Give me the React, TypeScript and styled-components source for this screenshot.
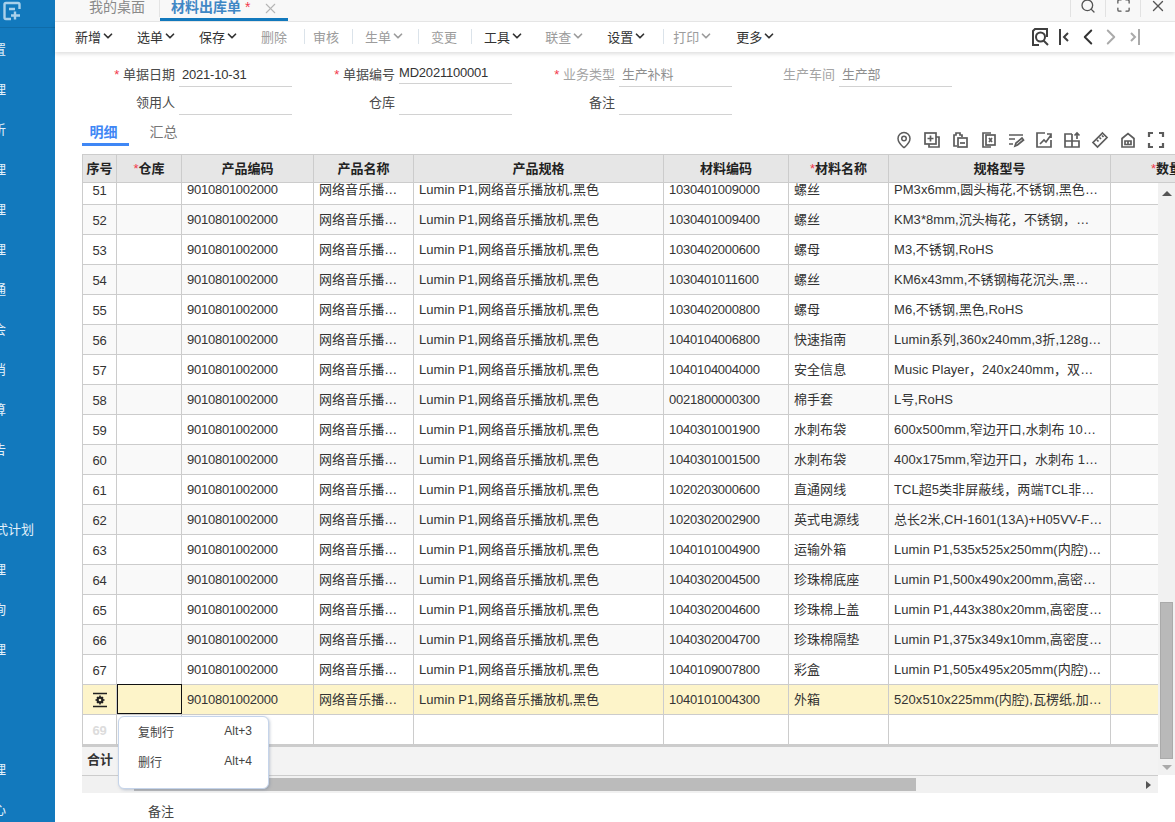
import React from 'react';
import styled, { createGlobalStyle } from 'styled-components';
import { ChevronDown, ChevronLeft, ChevronRight, Maximize, MapPin, Search, X } from 'lucide-react';

const GlobalStyle = createGlobalStyle`
  html, body {
    margin: 0;
    height: 100%;
    overflow: hidden;
    background: #fff;
  }
  body {
    font-family: "Liberation Sans", "Noto Sans CJK SC", sans-serif;
    font-size: 13px;
    color: #333;
  }
`;

type MenuEntry = { label: string; right: number };

const menuEntries: MenuEntry[] = [
  { label: '设置', right: 6 },
  { label: '管理', right: 6 },
  { label: '分析', right: 6 },
  { label: '管理', right: 6 },
  { label: '管理', right: 6 },
  { label: '管理', right: 6 },
  { label: '流通', right: 6 },
  { label: '财会', right: 6 },
  { label: '撤消', right: 6 },
  { label: '结算', right: 6 },
  { label: '报告', right: 6 },
  { label: '', right: 6 },
  { label: '模式计划', right: 34 },
  { label: '管理', right: 6 },
  { label: '查询', right: 6 },
  { label: '管理', right: 6 },
  { label: '', right: 6 },
  { label: '', right: 6 },
  { label: '管理', right: 6 },
  { label: '中心', right: 6 },
];

type ToolEntry = { label: string; arrow?: boolean; muted?: boolean; after: number; sepAfter?: number };

const toolEntries: ToolEntry[] = [
  { label: '新增', arrow: true, after: 22 },
  { label: '选单', arrow: true, after: 22 },
  { label: '保存', arrow: true, after: 22 },
  { label: '删除', muted: true, after: 17, sepAfter: 8 },
  { label: '审核', muted: true, after: 13, sepAfter: 12 },
  { label: '生单', arrow: true, muted: true, after: 13, sepAfter: 12 },
  { label: '变更', muted: true, after: 14, sepAfter: 12 },
  { label: '工具', arrow: true, after: 21 },
  { label: '联查', arrow: true, muted: true, after: 22 },
  { label: '设置', arrow: true, after: 16, sepAfter: 9 },
  { label: '打印', arrow: true, muted: true, after: 23 },
  { label: '更多', arrow: true, after: 0 },
];

const rows: [string, string, string, string][] = [
  ['51', '1030401009000', '螺丝', 'PM3x6mm,圆头梅花,不锈钢,黑色…'],
  ['52', '1030401009400', '螺丝', 'KM3*8mm,沉头梅花，不锈钢，…'],
  ['53', '1030402000600', '螺母', 'M3,不锈钢,RoHS'],
  ['54', '1030401011600', '螺丝', 'KM6x43mm,不锈钢梅花沉头,黑…'],
  ['55', '1030402000800', '螺母', 'M6,不锈钢,黑色,RoHS'],
  ['56', '1040104006800', '快速指南', 'Lumin系列,360x240mm,3折,128g…'],
  ['57', '1040104004000', '安全信息', 'Music Player，240x240mm，双…'],
  ['58', '0021800000300', '棉手套', 'L号,RoHS'],
  ['59', '1040301001900', '水刺布袋', '600x500mm,窄边开口,水刺布 10…'],
  ['60', '1040301001500', '水刺布袋', '400x175mm,窄边开口，水刺布 1…'],
  ['61', '1020203000600', '直通网线', 'TCL超5类非屏蔽线，两端TCL非…'],
  ['62', '1020302002900', '英式电源线', '总长2米,CH-1601(13A)+H05VV-F…'],
  ['63', '1040101004900', '运输外箱', 'Lumin P1,535x525x250mm(内腔)…'],
  ['64', '1040302004500', '珍珠棉底座', 'Lumin P1,500x490x200mm,高密…'],
  ['65', '1040302004600', '珍珠棉上盖', 'Lumin P1,443x380x20mm,高密度…'],
  ['66', '1040302004700', '珍珠棉隔垫', 'Lumin P1,375x349x10mm,高密度…'],
  ['67', '1040109007800', '彩盒', 'Lumin P1,505x495x205mm(内腔)…'],
  ['68', '1040101004300', '外箱', '520x510x225mm(内腔),瓦楞纸,加…'],
];

const GRID_COLUMNS = '34px 65px 132px 100px 250px 125px 100px 222px 112px';

const Logo = () => (
  <svg width="20" height="20" viewBox="0 0 20 20" fill="none" stroke="#a9d0ea" strokeWidth="2.4">
    <path d="M9 18H4a1.500 1.500 0 0 1-1.500-1.500v-13A1.500 1.500 0 0 1 4 2h12a1.500 1.500 0 0 1 1.500 1.500V8" />
    <path d="M7 8h6M13 10.500v8M9 14.500h9" />
  </svg>
);

const GridIcon = ({ children }: { children: React.ReactNode }) => (
  <svg width="18" height="18" viewBox="0 0 18 18" fill="none" stroke="#5c5c5c" strokeWidth="1.7">
    {children}
  </svg>
);

const gridTools: React.ReactNode[] = [
  <MapPin key="pin" size={18} color="#5c5c5c" strokeWidth={2} />,
  <GridIcon key="add">
    <rect x="2" y="2" width="11" height="11" />
    <path d="M13 6h3v10H6v-3M7.500 4.500v6M4.500 7.500h6" />
  </GridIcon>,
  <GridIcon key="paste">
    <path d="M6 15H3V4h2V2h4v2h2v2" />
    <rect x="7" y="7" width="9" height="9" />
    <path d="M9 12h5" />
  </GridIcon>,
  <GridIcon key="excel">
    <path d="M12 2H4v14h8" />
    <rect x="7" y="4" width="9" height="10" />
    <path d="M10 7l3 4M13 7l-3 4" />
  </GridIcon>,
  <GridIcon key="edit">
    <path d="M2 4h14M2 8h6M2 13h4M8 15l1-3 6-5 1.500 2-6 5z" />
  </GridIcon>,
  <GridIcon key="trend">
    <path d="M10 2H2v14h14V9" />
    <path d="M5 13l4-4 2 2 5-7M12 3h4v4" />
  </GridIcon>,
  <GridIcon key="split">
    <path d="M9 3H2v13h14v-6H2M9 3v13M14 8V2M11.500 4.500L14 2l2.500 2.500" />
  </GridIcon>,
  <GridIcon key="ruler">
    <path d="M11.500 2L16 6.500 6.500 16 2 11.500zM6 9l1.500 1.500M8.500 6.500L10 8M11 4.500l1.500 1.500" />
  </GridIcon>,
  <GridIcon key="home">
    <path d="M3 16V7.500L9 2.500l6 5V16zM6 10h6v3.500H6zM9 10v3.500" />
  </GridIcon>,
  <GridIcon key="full">
    <path d="M2 6V2h4M12 2h4v4M16 12v4h-4M6 16H2v-4" strokeWidth="2.200" />
  </GridIcon>,
];

const RowGear = () => (
  <svg width="16" height="16" viewBox="0 0 16 16">
    <path d="M1 1.500h14M1 14.500h14" stroke="#222" strokeWidth="1.600" />
    <circle cx="8" cy="8" r="2.400" fill="none" stroke="#222" strokeWidth="2.200" />
    <path d="M8 3.500v1.500M8 11v1.500M3.500 8h1.500M11 8h1.500M5 5l1 1M10 10l1 1M11 5l-1 1M6 10l-1 1" stroke="#222" strokeWidth="1.500" />
  </svg>
);

const EdgeIcon = ({ last, color }: { last?: boolean; color: string }) => (
  <svg width="14" height="20" viewBox="0 0 14 20" fill="none" stroke={color} strokeWidth="2">
    {last ? <path d="M11 2v16M3 6l4 4-4 4" /> : <path d="M3 2v16M11 6l-4 4 4 4" />}
  </svg>
);

const RecordSearch = () => (
  <svg width="18" height="18" viewBox="0 0 18 18" fill="none" stroke="#3f3f3f" strokeWidth="2">
    <path d="M8 17H2V3l2-2h12v8" />
    <circle cx="9.500" cy="9" r="4.500" />
    <path d="M12.500 12.500L17 17" />
  </svg>
);

export default function App() {
  return (
    <>
      <GlobalStyle />
      <Page>
        <Sidebar>
          <LogoBar>
            <Logo />
          </LogoBar>
          {menuEntries.map((entry, index) => (
            <SideItem key={index} $right={entry.right}>
              <span>{entry.label}</span>
            </SideItem>
          ))}
        </Sidebar>
        <Main>
          <TabBar>
            <PageTab>我的桌面</PageTab>
            <ActivePageTab>
              材料出库单<Star> *</Star>
              <TabClose>
                <X size={17} strokeWidth={1.500} />
              </TabClose>
            </ActivePageTab>
            <WindowControls>
              <WindowButton>
                <Search size={16} strokeWidth={2} />
              </WindowButton>
              <WindowButton>
                <Maximize size={15} strokeWidth={2} />
              </WindowButton>
              <WindowButton>
                <X size={18} strokeWidth={1.800} />
              </WindowButton>
            </WindowControls>
          </TabBar>

          <Toolbar>
            {toolEntries.map(entry => (
              <React.Fragment key={entry.label}>
                <ToolButton $muted={entry.muted} $after={entry.after}>
                  {entry.label}
                  {entry.arrow && <ChevronDown size={14} strokeWidth={3} />}
                </ToolButton>
                {entry.sepAfter !== undefined && <ToolSep $after={entry.sepAfter} />}
              </React.Fragment>
            ))}
            <RecordNav>
              <NavSlot $before={0}><RecordSearch /></NavSlot>
              <NavSlot $before={8}><EdgeIcon color="#3f3f3f" /></NavSlot>
              <NavSlot $before={4}><ChevronLeft size={26} strokeWidth={1.800} color="#333" /></NavSlot>
              <NavSlot $before={-3}><ChevronRight size={26} strokeWidth={1.800} color="#aaa" /></NavSlot>
              <NavSlot $before={4}><EdgeIcon last color="#aaa" /></NavSlot>
            </RecordNav>
          </Toolbar>

          <FormGrid>
            <Field>
              <FieldLabel><Star>* </Star>单据日期</FieldLabel>
              <FieldInput>2021-10-31</FieldInput>
            </Field>
            <Field>
              <FieldLabel><Star>* </Star>单据编号</FieldLabel>
              <FieldInput $raised>MD2021100001</FieldInput>
            </Field>
            <Field>
              <FieldLabel $muted><Star>* </Star>业务类型</FieldLabel>
              <FieldInput $muted>生产补料</FieldInput>
            </Field>
            <Field>
              <FieldLabel $muted>生产车间</FieldLabel>
              <FieldInput $muted>生产部</FieldInput>
            </Field>
            <Field>
              <FieldLabel>领用人</FieldLabel>
              <FieldInput />
            </Field>
            <Field>
              <FieldLabel>仓库</FieldLabel>
              <FieldInput />
            </Field>
            <Field>
              <FieldLabel>备注</FieldLabel>
              <FieldInput />
            </Field>
          </FormGrid>

          <DetailBar>
            <DetailTabs>
              <DetailTab $active>明细</DetailTab>
              <DetailTab>汇总</DetailTab>
            </DetailTabs>
            <GridTools>
              {gridTools}
            </GridTools>
          </DetailBar>

          <GridWrap>
            <HeaderRow>
              <HeaderCell>序号</HeaderCell>
              <HeaderCell><Star>*</Star>仓库</HeaderCell>
              <HeaderCell>产品编码</HeaderCell>
              <HeaderCell>产品名称</HeaderCell>
              <HeaderCell>产品规格</HeaderCell>
              <HeaderCell>材料编码</HeaderCell>
              <HeaderCell><Star>*</Star>材料名称</HeaderCell>
              <HeaderCell>规格型号</HeaderCell>
              <HeaderCell><Star>*</Star>数量</HeaderCell>
            </HeaderRow>
            <GridBody>
              <GridLeft>
                <RowsPane>
                  <RowList>
                    {rows.map(([no, code, name, spec], index) => {
                      const current = no === '68';
                      return (
                        <Row key={no} $tone={current ? 'active' : index % 2 === 1 ? 'alt' : 'plain'}>
                          <NumberCell>{current ? <RowGear /> : no}</NumberCell>
                          <Cell $selected={current} />
                          <Cell $code>9010801002000</Cell>
                          <Cell>网络音乐播…</Cell>
                          <Cell>Lumin P1,网络音乐播放机,黑色</Cell>
                          <Cell $code>{code}</Cell>
                          <Cell>{name}</Cell>
                          <Cell>{spec}</Cell>
                          <Cell />
                        </Row>
                      );
                    })}
                    <Row $tone="plain">
                      <NumberCell $ghost>69</NumberCell>
                      <Cell />
                      <Cell />
                      <Cell />
                      <Cell />
                      <Cell />
                      <Cell />
                      <Cell />
                      <Cell />
                    </Row>
                  </RowList>
                </RowsPane>
                <TotalRow>合计</TotalRow>
                <HScroll>
                  <HThumb />
                  <HArrow />
                </HScroll>
              </GridLeft>
              <VScroll>
                <VArrow />
                <VThumb />
                <VArrow $down />
              </VScroll>
            </GridBody>
            <ContextMenu>
              <MenuRow><span>复制行</span><span>Alt+3</span></MenuRow>
              <MenuRow><span>删行</span><span>Alt+4</span></MenuRow>
            </ContextMenu>
          </GridWrap>

          <BottomLabel>备注</BottomLabel>
        </Main>
      </Page>
    </>
  );
}

const Page = styled.div`
  display: flex;
  width: 1175px;
  height: 822px;
  overflow: hidden;
`;

const Sidebar = styled.div`
  flex: 0 0 55px;
  width: 55px;
  height: 822px;
  background: #1279bd;
  overflow: hidden;
  color: #e2f0fa;
`;

const LogoBar = styled.div`
  height: 28px;
  padding: 1px 0 0 2px;
  box-sizing: border-box;
  border-bottom: 1px solid #0f6ca9;
`;

const SideItem = styled.div<{ $right: number }>`
  width: ${p => p.$right}px;
  height: 40px;
  display: flex;
  justify-content: flex-end;
  align-items: center;
  white-space: nowrap;
`;

const Main = styled.div`
  flex: 1;
  min-width: 0;
  display: flex;
  flex-direction: column;
  position: relative;
`;

const TabBar = styled.div`
  height: 21px;
  flex: none;
  box-sizing: content-box;
  display: flex;
  background: #f8f8f8;
  border-bottom: 1px solid #e8e8e8;
  overflow: hidden;
`;

const PageTab = styled.div`
  width: 70px;
  height: 17px;
  line-height: 15px;
  padding-left: 34px;
  font-size: 14px;
  color: #8a8a8a;
  border-right: 1px solid #e4e4e4;
`;

const ActivePageTab = styled.div`
  width: 117px;
  padding-left: 11px;
  height: 18px;
  line-height: 15px;
  display: flex;
  font-size: 14px;
  font-weight: 700;
  color: #3f87c5;
  border-bottom: 3px solid #1279bd;
  white-space: pre;
`;

const Star = styled.span`
  color: #f2394c;
  font-weight: 400;
`;

const TabClose = styled.span`
  display: flex;
  margin: 0 0 2px 12px;
  color: #b5b5b5;
`;

const WindowControls = styled.div`
  margin-left: auto;
  display: flex;
`;

const WindowButton = styled.div`
  width: 35px;
  height: 17px;
  display: flex;
  align-items: center;
  justify-content: center;
  padding-bottom: 6px;
  box-sizing: border-box;
  color: #555;
  border-left: 1px solid #e2e2e2;
`;

const Toolbar = styled.div`
  height: 30px;
  flex: none;
  box-sizing: border-box;
  padding: 0 0 2px 20px;
  display: flex;
  align-items: center;
  background: #fff;
  box-shadow: 0 2px 4px rgba(0, 0, 0, 0.13);
  position: relative;
`;

const ToolButton = styled.div<{ $muted?: boolean; $after: number }>`
  display: flex;
  align-items: center;
  margin-right: ${p => p.$after}px;
  color: ${p => (p.$muted ? '#9c9c9c' : '#333')};
  white-space: nowrap;
`;

const ToolSep = styled.div<{ $after: number }>`
  width: 1px;
  height: 15px;
  background: #dbe3ea;
  margin-right: ${p => p.$after}px;
`;

const RecordNav = styled.div`
  position: absolute;
  left: 976px;
  top: 2px;
  display: flex;
  align-items: center;
  height: 26px;
`;

const NavSlot = styled.div<{ $before: number }>`
  display: flex;
  margin-left: ${p => p.$before}px;
`;

const FormGrid = styled.div`
  display: grid;
  grid-template-columns: repeat(4, 220px);
  grid-auto-rows: 23px;
  row-gap: 5px;
  padding: 12px 0 0 20px;
`;

const Field = styled.div`
  display: flex;
  gap: 4px;
`;

const FieldLabel = styled.div<{ $muted?: boolean }>`
  width: 100px;
  text-align: right;
  line-height: 22px;
  color: ${p => (p.$muted ? '#a4a4a4' : '#4a4a4a')};
`;

const FieldInput = styled.div<{ $muted?: boolean; $raised?: boolean }>`
  width: 113px;
  box-sizing: border-box;
  padding-left: ${p => (p.$raised ? '0' : '3px')};
  height: ${p => (p.$raised ? '20px' : '23px')};
  line-height: ${p => (p.$raised ? '18px' : '22px')};
  letter-spacing: -0.2px;
  border-bottom: 1px solid #d2d2d2;
  color: ${p => (p.$muted ? '#8f8f8f' : '#333')};
`;

const DetailBar = styled.div`
  flex: none;
  height: 39px;
  display: flex;
  justify-content: space-between;
  padding: 0 10px 0 27px;
`;

const DetailTabs = styled.div`
  height: 31px;
  display: flex;
  gap: 11px;
`;

const DetailTab = styled.div<{ $active?: boolean }>`
  width: 47px;
  box-sizing: border-box;
  text-align: center;
  font-size: 14px;
  padding-top: 6px;
  padding-right: ${p => (p.$active ? '4px' : '0')};
  font-weight: ${p => (p.$active ? 700 : 400)};
  color: ${p => (p.$active ? '#3f87f5' : '#777')};
  border-bottom: 3px solid ${p => (p.$active ? '#3f87f5' : 'transparent')};
`;

const GridTools = styled.div`
  display: flex;
  gap: 10px;
  margin-top: 16px;
  height: 18px;
`;

const GridWrap = styled.div`
  flex: none;
  position: relative;
  margin-left: 27px;
  width: 1093px;
  overflow: hidden;
`;

const HeaderRow = styled.div`
  display: grid;
  grid-template-columns: ${GRID_COLUMNS};
  width: 1140px;
  height: 29px;
  box-sizing: border-box;
  background: #e6e6e6;
  border-top: 1px solid #ccc;
  border-bottom: 1px solid #ccc;
  border-left: 1px solid #ccc;
`;

const HeaderCell = styled.div`
  line-height: 28px;
  text-align: center;
  font-weight: 700;
  color: #222;
  border-right: 1px solid #ccc;
  white-space: nowrap;
`;

const GridBody = styled.div`
  display: flex;
`;

const GridLeft = styled.div`
  width: 1076px;
  flex: none;
`;

const RowsPane = styled.div`
  height: 562px;
  overflow: hidden;
`;

const RowList = styled.div`
  margin-top: -8px;
`;

const rowBackgrounds = { plain: '#fff', alt: '#f9f9f9', active: '#fdf4c9' };

const Row = styled.div<{ $tone: 'plain' | 'alt' | 'active' }>`
  display: grid;
  grid-template-columns: ${GRID_COLUMNS};
  width: 1140px;
  height: 30px;
  box-sizing: border-box;
  background: ${p => rowBackgrounds[p.$tone]};
  border-left: 1px solid #ccc;
  border-bottom: 1px solid #ccc;
`;

const Cell = styled.div<{ $selected?: boolean; $code?: boolean }>`
  box-sizing: border-box;
  padding-left: 5px;
  line-height: 30px;
  letter-spacing: ${p => (p.$code ? '-0.25px' : '0.05px')};
  white-space: nowrap;
  overflow: hidden;
  color: #333;
  border-right: 1px solid #ccc;
  ${p => p.$selected && 'border: 1px solid #111; margin: -1px 0 0 0; height: 30px;'}
`;

const NumberCell = styled.div<{ $ghost?: boolean }>`
  display: flex;
  align-items: center;
  justify-content: center;
  padding-top: 1px;
  box-sizing: border-box;
  letter-spacing: -0.15px;
  border-right: 1px solid #ccc;
  font-weight: ${p => (p.$ghost ? 700 : 400)};
  color: ${p => (p.$ghost ? '#dcdcdc' : '#333')};
`;

const TotalRow = styled.div`
  height: 31px;
  box-sizing: border-box;
  padding-left: 5px;
  line-height: 25px;
  font-weight: 700;
  color: #333;
  background: #f3f3f3;
  border-top: 2px solid #ccc;
  border-bottom: 1px solid #ccc;
`;

const HScroll = styled.div`
  height: 17px;
  display: flex;
  align-items: center;
  background: #f1f1f1;
  padding-left: 52px;
`;

const HThumb = styled.div`
  width: 782px;
  height: 13px;
  background: #bbb;
`;

const HArrow = styled.div`
  margin-left: auto;
  margin-right: 7px;
  border-left: 5px solid #555;
  border-top: 4px solid transparent;
  border-bottom: 4px solid transparent;
`;

const VScroll = styled.div`
  flex: none;
  width: 17px;
  height: 592px;
  background: #f1f1f1;
  display: flex;
  flex-direction: column;
  align-items: center;
  padding-top: 8px;
  box-sizing: border-box;
`;

const VArrow = styled.div<{ $down?: boolean }>`
  border-left: 5px solid transparent;
  border-right: 5px solid transparent;
  ${p => (p.$down ? 'border-top: 5px solid #aaa; margin-top: 6px;' : 'border-bottom: 5px solid #555;')}
`;

const VThumb = styled.div`
  width: 13px;
  height: 157px;
  margin-top: 406px;
  background: #b9b9b9;
  border: 1px solid #aaa;
  box-sizing: border-box;
`;

const ContextMenu = styled.div`
  position: absolute;
  left: 36px;
  top: 562px;
  width: 151px;
  height: 73px;
  box-sizing: border-box;
  background: #fff;
  border: 1px solid #c5d4ea;
  border-radius: 6px;
  box-shadow: 1px 1px 3px rgba(90, 110, 140, 0.35);
  font-size: 12px;
`;

const MenuRow = styled.div`
  height: 30px;
  margin-top: -1px;
  margin-bottom: 1px;
  display: flex;
  align-items: center;
  justify-content: space-between;
  padding: 0 16px 0 19px;
  color: #444;
`;

const BottomLabel = styled.div`
  flex: none;
  margin: 8px 0 0 93px;
  color: #444;
`;
